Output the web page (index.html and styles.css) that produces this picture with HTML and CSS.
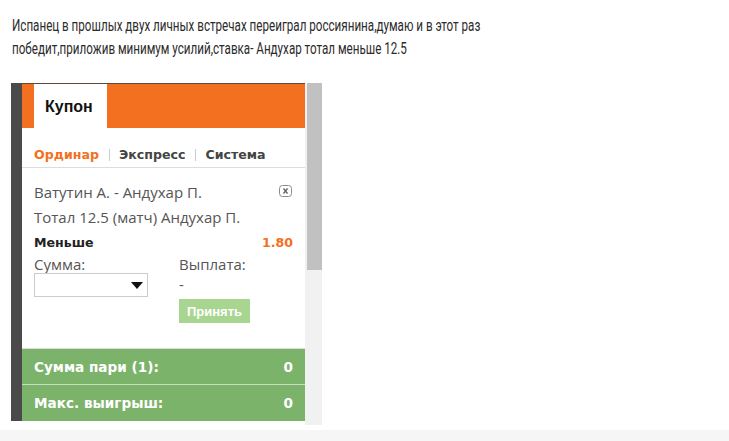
FILE: index.html
```html
<!doctype html>
<html lang="ru">
<head>
<meta charset="utf-8">
<meta name="viewport" content="initial-scale=1">
<title>Прогноз: Ватутин - Андухар</title>
<link rel="stylesheet" href="styles.css">
</head>
<body>
  <div class="post">
    <p class="post-text">Испанец в прошлых двух личных встречах переиграл россиянина,думаю и в этот раз победит,приложив минимум усилий,ставка- Андухар тотал меньше 12.5</p>

    <div class="shot">
      <div class="shot-edge"></div>

      <div class="coupon">
        <div class="coupon-head">
          <div class="coupon-tab">Купон</div>
        </div>

        <div class="bet-types">
          <span class="bet-type active">Ординар</span>
          <span class="sep"></span>
          <span class="bet-type">Экспресс</span>
          <span class="sep"></span>
          <span class="bet-type">Система</span>
        </div>

        <div class="bet">
          <div class="bet-line">
            <span>Ватутин А. - Андухар П.</span>
            <svg class="close" width="13" height="12" viewBox="0 0 13 12">
              <rect x="0.5" y="0.5" width="12" height="11" rx="3" fill="#fff" stroke="#8a8a8a"/>
              <path d="M4.5 3.5l4 5M8.5 3.5l-4 5" stroke="#666" stroke-width="1.4"/>
            </svg>
          </div>
          <div class="bet-line">Тотал 12.5 (матч) Андухар П.</div>
          <div class="bet-line outcome">
            <span>Меньше</span>
            <span class="odds">1.80</span>
          </div>

          <div class="stake">
            <div class="stake-col">
              <div class="label">Сумма:</div>
              <div class="select"><span class="arrow"></span></div>
            </div>
            <div class="stake-col">
              <div class="label">Выплата:</div>
              <div class="payout">-</div>
              <button class="accept">Принять</button>
            </div>
          </div>
        </div>

        <div class="total-row">
          <span>Сумма пари (1):</span>
          <span>0</span>
        </div>
        <div class="total-row">
          <span>Макс. выигрыш:</span>
          <span>0</span>
        </div>
      </div>

      <div class="scroll">
        <div class="scroll-thumb"></div>
      </div>
    </div>
  </div>
  <div class="page-bottom"></div>
</body>
</html>
```

FILE: styles.css
```css
* {
  box-sizing: border-box;
}

body {
  margin: 0;
  background: #fff;
  font-family: Roboto, "Liberation Sans", sans-serif;
  font-size: 16px;
  color: #333;
}

.post {
  height: 430px;
  padding: 14px 0 0 12px;
}

/* the post text is set narrow, like a squeezed face */
.post-text {
  width: 680px;
  margin: 0 0 23px;
  color: #2b2b2b;
  line-height: 23px;
  transform: scaleX(0.727);
  transform-origin: left top;
}

/* screenshot of the coupon */
.shot {
  display: flex;
  width: 311px;
  height: 342px;
  margin-left: -1px;
  font-family: "Open Sans", "Liberation Sans", sans-serif;
  font-size: 15px;
}

.shot-edge {
  width: 11px;
  height: 338px;
  background: #4a4a4a;
}

.coupon {
  display: flex;
  flex-direction: column;
  width: 283px;
  height: 338px;
  background: #fff;
}

.coupon-head {
  height: 45px;
  padding-left: 12px;
  background: #f37021;
  border-top: 1px solid #5a4a40;
}

.coupon-tab {
  width: 73px;
  height: 44px;
  padding: 14px 0 0 11px;
  background: #fff;
  color: #111;
  font-family: "Liberation Sans", Arial, sans-serif;
  font-size: 16px;
  font-weight: 700;
  line-height: 18px;
}

.bet-types {
  display: flex;
  align-items: center;
  height: 40px;
  padding: 15px 12px 0;
  border-bottom: 1px solid #ddd;
  font-family: "DejaVu Sans", Verdana, sans-serif;
  font-size: 12.6px;
  line-height: 16px;
}

.bet-type {
  font-weight: 700;
  color: #444;
}

.bet-type.active {
  color: #f37021;
}

.sep {
  width: 1px;
  height: 12px;
  margin: 0 9px 0 10px;
  background: #ccc;
}

.bet {
  flex: 1;
  padding: 12px 12px 0;
  color: #555;
  border-bottom: 1px solid #ddd;
}

.bet-line {
  display: flex;
  justify-content: space-between;
  align-items: center;
  height: 25px;
  line-height: 25px;
}

.close {
  margin-top: -3px;
  margin-right: 1px;
}

.outcome {
  font-family: "DejaVu Sans", Verdana, sans-serif;
  font-size: 12.6px;
  font-weight: 700;
  color: #222;
}

.odds {
  color: #f37021;
}

.stake {
  display: flex;
}

.stake-col {
  flex: none;
  width: 145px;
}

.stake-col + .stake-col {
  width: auto;
}

.label {
  line-height: 18px;
}

.select {
  position: relative;
  width: 114px;
  height: 24px;
  border: 1px solid #ccc;
  background: #fff;
}

.arrow {
  position: absolute;
  right: 4px;
  top: 8px;
  border-left: 6px solid transparent;
  border-right: 6px solid transparent;
  border-top: 7px solid #111;
}

.payout {
  height: 22px;
  line-height: 22px;
}

.accept {
  display: block;
  width: 71px;
  height: 24px;
  margin-top: 4px;
  padding: 0;
  border: 0;
  background: #a8d690;
  color: #fff;
  font-family: "Liberation Sans", Arial, sans-serif;
  font-size: 13px;
  font-weight: 700;
}

.total-row {
  display: flex;
  justify-content: space-between;
  height: 36px;
  padding: 2px 12px 0;
  background: #7cb36a;
  border-bottom: 1px solid #c6dfbc;
  color: #fff;
  font-family: "DejaVu Sans", Verdana, sans-serif;
  font-size: 13.6px;
  font-weight: 700;
  line-height: 33px;
}

.total-row:last-child {
  border-bottom: 0;
}

.scroll {
  width: 17px;
  padding-left: 2px;
  background: #f1f1f1;
}

.scroll-thumb {
  height: 187px;
  background: #c1c1c1;
}

.page-bottom {
  height: 11px;
  background: #f6f6f6;
}
```
